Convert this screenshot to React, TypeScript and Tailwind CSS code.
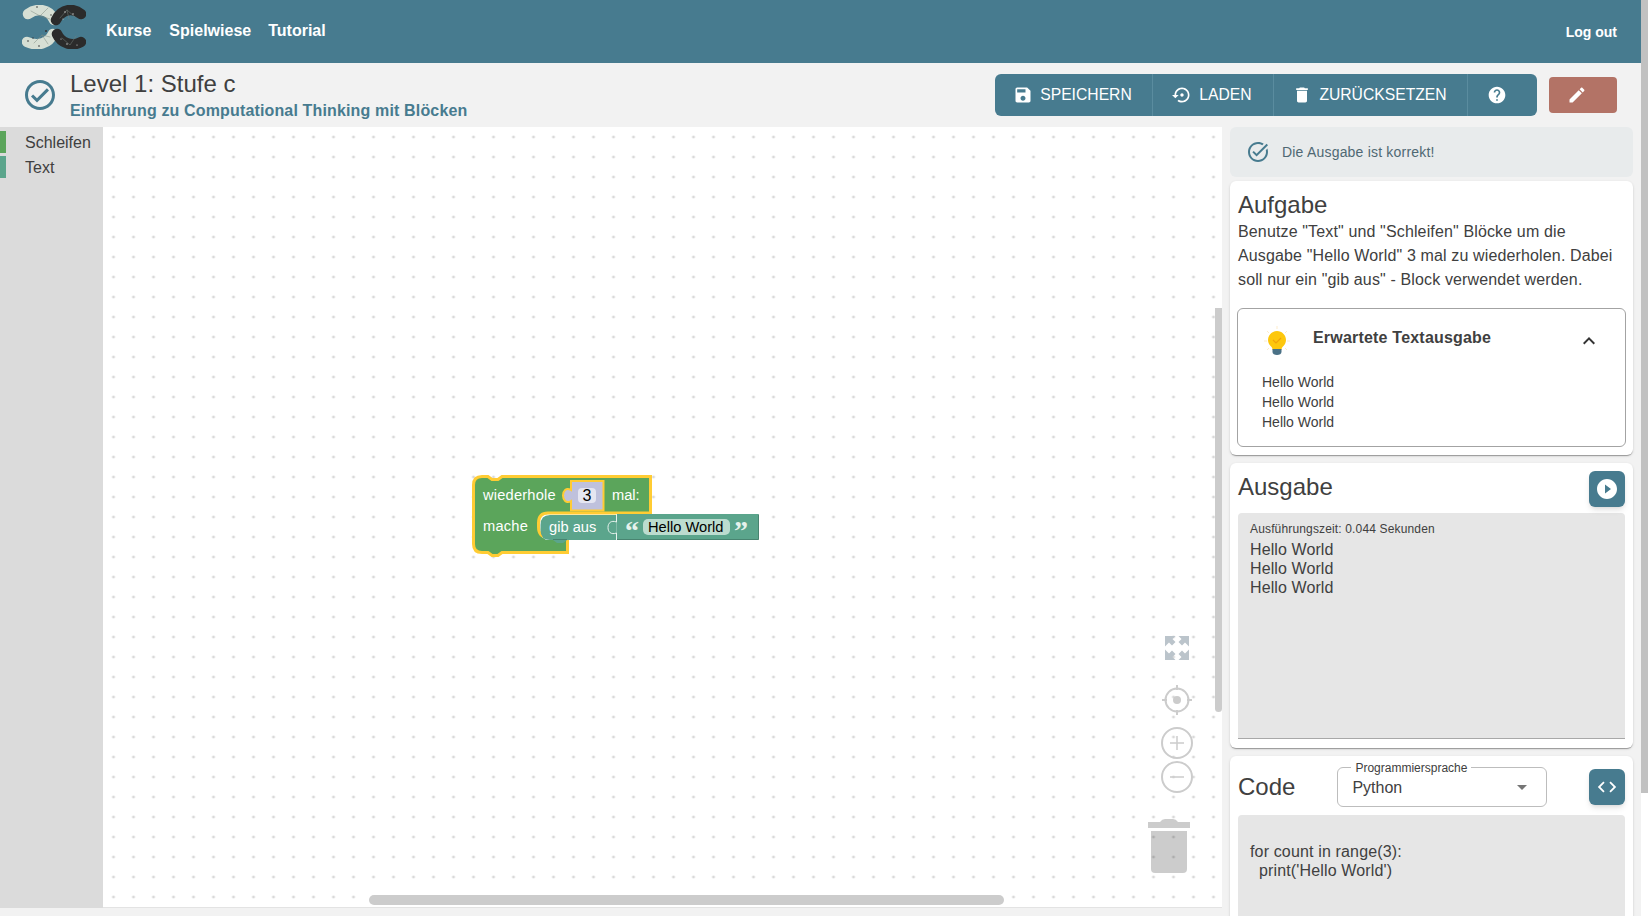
const font = "[font-family:'Liberation_Sans',Arial,sans-serif]";

const Icon = ({ d, className }: { d: string; className: string }) => (
  <svg viewBox="0 0 24 24" className={className} fill="currentColor">
    <path d={d} />
  </svg>
);

const icons = {
  save: "M17 3H5c-1.11 0-2 .9-2 2v14c0 1.1.89 2 2 2h14c1.1 0 2-.9 2-2V7l-4-4zm-5 16c-1.66 0-3-1.34-3-3s1.34-3 3-3 3 1.34 3 3-1.34 3-3 3zm3-10H5V5h10v4z",
  restore:
    "M14 12c0-1.1-.9-2-2-2s-2 .9-2 2 .9 2 2 2 2-.9 2-2zm-2-9c-4.97 0-9 4.03-9 9H0l4 4 4-4H5c0-3.87 3.13-7 7-7s7 3.13 7 7-3.13 7-7 7c-1.51 0-2.91-.49-4.06-1.3l-1.42 1.44C8.04 20.3 9.94 21 12 21c4.97 0 9-4.03 9-9s-4.03-9-9-9z",
  trash: "M6 19c0 1.1.9 2 2 2h8c1.1 0 2-.9 2-2V7H6v12zM19 4h-3.5l-1-1h-5l-1 1H5v2h14V4z",
  help: "M12 2C6.48 2 2 6.48 2 12s4.48 10 10 10 10-4.48 10-10S17.52 2 12 2zm1 17h-2v-2h2v2zm2.07-7.75l-.9.92C13.45 12.9 13 13.5 13 15h-2v-.5c0-1.1.45-2.1 1.17-2.83l1.24-1.26c.37-.36.59-.86.59-1.41 0-1.1-.9-2-2-2s-2 .9-2 2H8c0-2.21 1.79-4 4-4s4 1.79 4 4c0 .88-.36 1.68-.93 2.25z",
  edit: "M3 17.25V21h3.75L17.81 9.94l-3.75-3.75L3 17.25zM20.71 7.04c.39-.39.39-1.02 0-1.41l-2.34-2.34c-.39-.39-1.02-.39-1.41 0l-1.83 1.83 3.75 3.75 1.83-1.83z",
  play: "M12 2C6.48 2 2 6.48 2 12s4.48 10 10 10 10-4.48 10-10S17.52 2 12 2zm-2 14.5v-9l6 4.5-6 4.5z",
  code: "M9.4 16.6L4.8 12l4.6-4.6L8 6l-6 6 6 6 1.4-1.4zm5.2 0l4.6-4.6-4.6-4.6L16 6l6 6-6 6-1.4-1.4z",
  up: "M12 8l-6 6 1.41 1.41L12 10.83l4.59 4.58L18 14z",
  drop: "M7 10l5 5 5-5z",
  circleCheck:
    "M12 2C6.48 2 2 6.48 2 12s4.48 10 10 10 10-4.48 10-10S17.52 2 12 2zm0 18c-4.41 0-8-3.59-8-8s3.59-8 8-8 8 3.59 8 8-3.59 8-8 8zm4.59-12.42L10 14.17l-2.59-2.58L6 13l4 4 8-8z",
  taskAlt:
    "M22 5.18 10.59 16.6l-4.24-4.24 1.41-1.41 2.83 2.83 10-10L22 5.18zm-2.21 5.04c.13.57.21 1.17.21 1.78 0 4.42-3.58 8-8 8s-8-3.58-8-8 3.58-8 8-8c1.58 0 3.04.46 4.28 1.25l1.44-1.44C16.1 2.67 14.13 2 12 2 6.48 2 2 6.48 2 12s4.48 10 10 10 10-4.48 10-10c0-1.19-.22-2.33-.6-3.39l-1.61 1.61z",
};

const cardClass =
  "rounded-md bg-white shadow-[0_2px_1px_-1px_rgba(0,0,0,0.2),0_1px_1px_0_rgba(0,0,0,0.14),0_1px_3px_0_rgba(0,0,0,0.12)]";

const Logo = () => (
  <svg viewBox="0 0 64 44" className="h-[44px] w-[64px]" fill="none" strokeLinecap="round">
    <path d="M6 9 C14 3 27 3 32 15" stroke="#d6dfd4" strokeWidth="10.500" />
    <path d="M34 15 C40 3 52 3 59 9" stroke="#2b2b2b" strokeWidth="10.500" />
    <path d="M5 37 C16 42 27 38 31 29" stroke="#d6dfd4" strokeWidth="10.500" />
    <path d="M35 29 C39 38 50 42 59 37" stroke="#2b2b2b" strokeWidth="10.500" />
    <g stroke="#7f8a80" strokeWidth="0.500">
      <path d="M9 6l9 5 8-8M18 11l10 3M12 38l8-8 6 9M20 30l8 2" />
    </g>
    <g stroke="#77807a" strokeWidth="0.500">
      <path d="M38 13l7-8 8 7M45 5l2 9M40 33l8 7 6-9" />
    </g>
    <g fill="#333">
      <circle cx="15" cy="2" r="0.8" />
      <circle cx="29" cy="10" r="0.7" />
      <circle cx="6" cy="36" r="0.8" />
      <circle cx="24" cy="26" r="1" />
      <circle cx="17" cy="41" r="0.8" />
      <circle cx="11" cy="33" r="0.7" />
    </g>
    <g fill="#ddd">
      <circle cx="43" cy="7" r="0.7" />
      <circle cx="51" cy="9" r="0.7" />
      <circle cx="41" cy="14" r="0.6" />
      <circle cx="45" cy="39" r="0.7" />
      <circle cx="39" cy="34" r="0.6" />
      <circle cx="55" cy="40" r="0.6" />
    </g>
  </svg>
);

const Bulb = () => (
  <svg viewBox="0 0 32 32" className="h-[32px] w-[32px]">
    <g stroke="#fdeccb" strokeWidth="1">
      <path d="M16 1v3M3 16h3M26 16h3M6 6l2 2M26 6l-2 2M6 25l2-2M26 25l-2-2" />
    </g>
    <path d="M16 6c-5 0-9 4-9 9 0 3 1.500 5 3.500 7 .8.800 1 2 1 3h9c0-1 .2-2.200 1-3 2-2 3.500-4 3.500-7 0-5-4-9-9-9z" fill="#fdc70c" />
    <path d="M12 15l3 3 5-5" fill="none" stroke="#f0a30a" strokeWidth="1.200" />
    <path d="M11.500 24h9v3c0 2-2 3-4.500 3s-4.500-1-4.500-3z" fill="#4a7186" />
  </svg>
);

const Workspace = () => (
  <svg viewBox="103 127 1119 780" className="absolute inset-0 h-[780px] w-[1119px]">
    <defs>
      <pattern id="grid" x="103.500" y="127" width="20" height="20" patternUnits="userSpaceOnUse">
        <path d="M8.500 10h3M10 8.500v3" stroke="#ccc" strokeWidth="1" />
      </pattern>
    </defs>
    <rect x="103" y="127" width="1119" height="780" fill="url(#grid)" />

    {/* loop block */}
    <path
      d="M473.500 485 Q473.500 476.500 482 476.500 H488 l4 3 h6 l4 -3 H650.500 V513 H548 Q538.500 513 538.500 523 V527 Q538.500 537 548 537 H567.500 V552.500 H502 l-4 3 h-6 l-4 -3 H482 Q473.500 552.500 473.500 544 Z"
      fill="#5ba55b"
      stroke="#ffcc33"
      strokeWidth="3"
    />
    <path
      d="M571 481 H603.500 V510.500 H571 V501 C566 504 563 500 563 495.500 C563 491 566 487 571 490 Z"
      fill="#bfc1dc"
      stroke="#ffcc33"
      strokeWidth="2"
    />
    <rect x="578" y="488" width="18" height="15" rx="4" fill="#e5e6f1" />

    {/* print block + text block */}
    <path d="M542 537 H560 V540 H546 Z" fill="#fff" />
    <path
      d="M550 515 H616.500 V540 H567 l-4 3 h-6 l-4 -3 H550 Q540.500 540 540.500 530 V525 Q540.500 515 550 515 Z"
      fill="#5ba58c"
    />
    <path d="M553 539.500 H567" stroke="#488470" strokeWidth="1" />
    <rect x="616.500" y="514" width="142" height="26" fill="#5ba58c" />
    <path d="M616.500 539.500 H758.500 V514.500" stroke="#488470" strokeWidth="1" fill="none" />
    <path
      d="M616.500 514 V522 C611 520 608 523 608 527.500 C608 532 611 535 616.500 533 V540"
      fill="none"
      stroke="#e8f3ee"
      strokeWidth="1"
    />
    <rect x="643" y="519" width="87" height="16" rx="5" fill="#bcdccf" />

    <g fontFamily="'Liberation Sans',Arial,sans-serif" fontSize="14.670" fill="#fff">
      <text x="483" y="500" letterSpacing="0.2">wiederhole</text>
      <text x="612" y="500">mal:</text>
      <text x="483" y="531" letterSpacing="0.2">mache</text>
      <text x="549" y="532">gib aus</text>
      <text x="582.500" y="501" fill="#000" fontSize="16">3</text>
      <text x="648" y="532" fill="#000">Hello World</text>
    </g>
    <g fontFamily="'Liberation Serif',serif" fontSize="28" fontWeight="700" fill="#e5f2ec">
      <text x="625" y="540">“</text>
      <text x="734" y="540">”</text>
    </g>

    {/* expand */}
    <g fill="#bbc4cb">
      <path d="M1165 636h10.500l-3 3 3 3-3.500 3.500-3-3-4 4z" />
      <path d="M1189 636h-10.500l3 3-3 3 3.500 3.500 3-3 4 4z" />
      <path d="M1165 660h10.500l-3-3 3-3-3.500-3.500-3 3-4-4z" />
      <path d="M1189 660h-10.500l3-3-3-3 3.500-3.500 3 3 4-4z" />
    </g>

    {/* reset, zoom */}
    <g fill="none" stroke="#ccc" strokeWidth="2">
      <circle cx="1177" cy="700" r="11.500" />
      <path d="M1177 685v5M1177 710v5M1162 700h5M1187 700h5" />
      <circle cx="1177" cy="743" r="15" />
      <circle cx="1177" cy="777" r="15" />
      <path d="M1170 743h14M1177 736v14M1170 777h14" strokeWidth="1.500" />
    </g>
    <circle cx="1177" cy="700" r="4" fill="#ccc" />

    {/* trash */}
    <g fill="#000" fillOpacity="0.2">
      <path d="M1148 822h42v6h-42z" />
      <path d="M1160 822q2-3 5-3h8q3 0 5 3z" />
      <path d="M1151 831h36v38q0 4-4 4h-28q-4 0-4-4z" />
    </g>
  </svg>
);

const Canvas = () => (
  <div className="relative h-[781px] w-[1119px] border-b border-[#e3e3e3] bg-white">
    <Workspace />
    <div className="absolute right-0 top-[181px] h-[404px] w-[7px] rounded-b-sm bg-[#cccccc]" />
    <div className="absolute left-[266px] top-[768px] h-[10px] w-[635px] rounded-[5px] bg-[#cccccc]" />
  </div>
);

const toolbarItems = [
  { label: "Speichern", icon: icons.save, width: "w-[158px]" },
  { label: "Laden", icon: icons.restore, width: "w-[121px]" },
  { label: "Zurücksetzen", icon: icons.trash, width: "w-[194px]" },
];

const App = () => {
  return (
    <div className={`${font} flex h-[916px] w-full overflow-hidden bg-[#f2f2f2] text-[#404040]`}>
      <div className="flex w-[1641px] shrink-0 flex-col">
        <header className="flex h-[63px] shrink-0 items-center bg-[#477b8f] pl-[22px] pr-[24px] text-white">
          <div className="-mt-[9px]">
            <Logo />
          </div>
          <nav className="ml-[20px] -mt-[2px] flex gap-[17px] text-base font-bold">
            <span>Kurse</span>
            <span className="ml-[1px]">Spielwiese</span>
            <span>Tutorial</span>
          </nav>
          <span className="ml-auto text-sm font-bold">Log out</span>
        </header>

        <div className="flex h-[64px] shrink-0 items-center">
          <Icon d={icons.circleCheck} className="ml-[22px] h-[36px] w-[36px] text-[#477b8f]" />
          <div className="ml-[12px]">
            <h1 className="text-2xl leading-[28px]">Level 1: Stufe c</h1>
            <p className="mt-[3px] text-base font-bold leading-[20px] tracking-[0.15px] text-[#477b8f]">
              Einführung zu Computational Thinking mit Blöcken
            </p>
          </div>
          <div className="ml-auto flex h-[42px] rounded-md bg-[#477b8f] text-white">
            {toolbarItems.map((item) => (
              <div
                key={item.label}
                className={`flex items-center justify-center gap-[7px] border-r border-[#5a8c9f] pr-[2px] ${item.width}`}
              >
                <Icon d={item.icon} className="h-[20px] w-[20px]" />
                <span className="text-[15.7px] uppercase">{item.label}</span>
              </div>
            ))}
            <div className="flex w-[69px] items-center pl-[19px]">
              <Icon d={icons.help} className="h-[20px] w-[20px]" />
            </div>
          </div>
          <div className="ml-[12px] mr-[24px] flex h-[36px] w-[68px] items-center rounded bg-[#b37366] pl-[18px] text-white">
            <Icon d={icons.edit} className="h-[20px] w-[20px]" />
          </div>
        </div>

        <div className="flex h-[789px] shrink-0">
          <aside className="h-[781px] w-[103px] bg-[#dbdbdb] pt-[4px] text-base">
            <div className="flex h-[22px] items-center gap-[19px]">
              <span className="h-full w-[6px] bg-[#5ba55b]" />
              <span className="mt-[1px]">Schleifen</span>
            </div>
            <div className="mt-[3px] flex h-[22px] items-center gap-[19px]">
              <span className="h-full w-[6px] bg-[#5ba58c]" />
              <span className="mt-[1px]">Text</span>
            </div>
          </aside>

          <Canvas />

          <div className="ml-[8px] flex w-[403px] flex-col gap-[8px]">
            <div className="mb-[-4px] flex h-[50px] shrink-0 items-center rounded-md bg-[#e8ebec] pl-[16px] text-[#4f6873]">
              <Icon d={icons.taskAlt} className="h-[24px] w-[24px] text-[#477b8f]" />
              <span className="ml-[12px] text-sm tracking-[0.2px]">Die Ausgabe ist korrekt!</span>
            </div>

            <section className={`${cardClass} h-[274px] shrink-0 px-[7px] pt-[10px]`}>
              <h2 className="pl-[1px] text-2xl leading-[28px]">Aufgabe</h2>
              <p className="mt-[1px] pl-[1px] text-base leading-[24px] tracking-[0.14px]">
                Benutze "Text" und "Schleifen" Blöcke um die
                <br />
                Ausgabe "Hello World" 3 mal zu wiederholen. Dabei
                <br />
                soll nur ein "gib aus" - Block verwendet werden.
              </p>
              <div className="mt-[16px] h-[139px] rounded-md border border-[#a3a3a3]">
                <div className="flex h-[63px] items-center pl-[23px]">
                  <div className="mt-[1px]">
                    <Bulb />
                  </div>
                  <span className="ml-[20px] mb-[6px] text-base font-bold tracking-[0.2px]">Erwartete Textausgabe</span>
                  <Icon d={icons.up} className="ml-auto mr-[24px] h-[24px] w-[24px] text-[#333]" />
                </div>
                <div className="pl-[24px] text-sm leading-[20px]">
                  <div>Hello World</div>
                  <div>Hello World</div>
                  <div>Hello World</div>
                </div>
              </div>
            </section>

            <section className={`${cardClass} h-[285px] shrink-0 px-[8px] pt-[8px]`}>
              <div className="flex h-[42px] items-start justify-between">
                <h2 className="mt-[2px] text-2xl leading-[28px]">Ausgabe</h2>
                <div className="flex h-[36px] w-[36px] items-center justify-center rounded-md bg-[#477b8f] text-white shadow-md">
                  <Icon d={icons.play} className="h-[24px] w-[24px]" />
                </div>
              </div>
              <div className="h-[226px] rounded-t border-b border-[#a8a8a8] bg-[#e6e6e6] pl-[12px] pt-[8px]">
                <div className="text-xs leading-[16px] tracking-[0.15px]">Ausführungszeit: 0.044 Sekunden</div>
                <div className="mt-[3px] text-base leading-[19px] tracking-[0.1px]">
                  <div>Hello World</div>
                  <div>Hello World</div>
                  <div>Hello World</div>
                </div>
              </div>
            </section>

            <section className={`${cardClass} h-[200px] shrink-0 px-[8px] pt-[11px]`}>
              <div className="flex h-[40px] items-center">
                <h2 className="text-2xl">Code</h2>
                <div className="relative ml-[42px] flex h-[40px] w-[210px] items-center rounded-md border border-[#bdbdbd] pl-[14px] pt-[1px] text-base">
                  <span className="absolute -top-[8px] left-[13px] bg-white px-[4px] text-xs leading-[16px]">
                    Programmiersprache
                  </span>
                  <span>Python</span>
                  <Icon d={icons.drop} className="absolute right-[12px] top-[7px] h-[24px] w-[24px] text-[#757575]" />
                </div>
                <div className="ml-auto flex h-[36px] w-[36px] items-center justify-center rounded-md bg-[#477b8f] text-white shadow-md">
                  <Icon d={icons.code} className="h-[22px] w-[22px]" />
                </div>
              </div>
              <div className="mt-[8px] h-[140px] rounded-t bg-[#e6e6e6] pl-[12px] pt-[27px] text-base leading-[19px] tracking-[0.15px]">
                <div>for count in range(3):</div>
                <div className="pl-[9px]">print('Hello World')</div>
              </div>
            </section>
          </div>
        </div>
      </div>

      <div className="w-[7px] bg-white">
        <div className="h-[793px] bg-[#c1c1c1]" />
      </div>
    </div>
  );
};

export default App;
